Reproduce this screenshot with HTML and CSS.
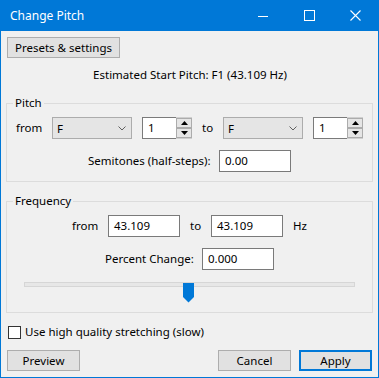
FILE: index.html
```html
<!DOCTYPE html>
<html>
<head>
<meta charset="utf-8">
<link rel="stylesheet" href="styles.css">
</head>
<body>
<div class="window">
  <div class="titlebar">
    <span class="title">Change Pitch</span>
    <div class="caption-btns">
      <span class="cbtn"><svg width="10" height="10" viewBox="0 0 10 10"><path d="M0 5.5H10" stroke="#fff" stroke-width="1"/></svg></span>
      <span class="cbtn"><svg width="11" height="11" viewBox="0 0 11 11"><rect x="0.5" y="0.5" width="10" height="10" fill="none" stroke="#fff" stroke-width="1"/></svg></span>
      <span class="cbtn"><svg width="11" height="11" viewBox="0 0 11 11"><path d="M0.5 0.5L10.5 10.5M10.5 0.5L0.5 10.5" stroke="#fff" stroke-width="1.1"/></svg></span>
    </div>
  </div>
  <div class="content">
    <div class="top-row"><button class="btn presets">Presets &amp; settings</button></div>
    <div class="estimate">Estimated Start Pitch: F1 (43.109 Hz)</div>

    <div class="group pitch">
      <div class="legend">Pitch</div>
      <div class="row r1">
        <span class="lbl l-from">from</span>
        <div class="combo"><span>F</span><svg class="chev" width="8" height="5" viewBox="0 0 8 5"><path d="M0.5 0.5L4 4L7.5 0.5" fill="none" stroke="#606060" stroke-width="1"/></svg></div>
        <div class="spin">
          <div class="spin-text">1</div>
          <div class="spin-btns">
            <div class="sb"><svg width="7" height="4" viewBox="0 0 7 4"><path d="M0 4L3.5 0L7 4Z" fill="#000"/></svg></div>
            <div class="sb"><svg width="7" height="4" viewBox="0 0 7 4"><path d="M0 0L7 0L3.5 4Z" fill="#000"/></svg></div>
          </div>
        </div>
        <span class="lbl l-to">to</span>
        <div class="combo"><span>F</span><svg class="chev" width="8" height="5" viewBox="0 0 8 5"><path d="M0.5 0.5L4 4L7.5 0.5" fill="none" stroke="#606060" stroke-width="1"/></svg></div>
        <div class="spin">
          <div class="spin-text">1</div>
          <div class="spin-btns">
            <div class="sb"><svg width="7" height="4" viewBox="0 0 7 4"><path d="M0 4L3.5 0L7 4Z" fill="#000"/></svg></div>
            <div class="sb"><svg width="7" height="4" viewBox="0 0 7 4"><path d="M0 0L7 0L3.5 4Z" fill="#000"/></svg></div>
          </div>
        </div>
      </div>
      <div class="row r2">
        <span class="lbl l-semi">Semitones (half-steps):</span>
        <div class="tb">0.00</div>
      </div>
    </div>

    <div class="group freq">
      <div class="legend">Frequency</div>
      <div class="row f1">
        <span class="lbl l-ffrom">from</span>
        <div class="tb">43.109</div>
        <span class="lbl l-to">to</span>
        <div class="tb">43.109</div>
        <span class="lbl l-hz">Hz</span>
      </div>
      <div class="row f2">
        <span class="lbl l-pct">Percent Change:</span>
        <div class="tb">0.000</div>
      </div>
      <div class="slider">
        <div class="track"></div>
        <svg class="thumb" width="11" height="20" viewBox="0 0 11 20"><path d="M0 0H11V14L5.5 19.5L0 14Z" fill="#0078d7"/></svg>
      </div>
    </div>

    <label class="check"><span class="box"></span><span>Use high quality stretching (slow)</span></label>

    <div class="buttons">
      <button class="btn">Preview</button>
      <span class="spacer"></span>
      <button class="btn">Cancel</button>
      <button class="btn apply">Apply</button>
    </div>
  </div>
</div>
</body>
</html>
```

FILE: styles.css
```css
* { box-sizing: border-box; }
html, body { margin: 0; padding: 0; }
body {
  width: 379px;
  height: 378px;
  font-family: "Noto Sans", "Open Sans", sans-serif;
  font-size: 11.5px;
  color: #000;
  background: #f0f0f0;
}
.window {
  width: 379px;
  height: 378px;
  border: 1px solid #0078d7;
  border-top: 0;
  background: #f0f0f0;
  display: flex;
  flex-direction: column;
}
.titlebar {
  height: 31px;
  background: #0078d7;
  display: flex;
  align-items: center;
  color: #fff;
  flex: none;
}
.title {
  margin-left: 9px;
  font-size: 12px;
  line-height: 16px;
}
.caption-btns {
  margin-left: auto;
  display: flex;
  height: 31px;
}
.cbtn {
  width: 46px;
  height: 31px;
  display: flex;
  align-items: center;
  justify-content: center;
}
.content {
  padding: 6px 5px 0 6px;
  display: flex;
  flex-direction: column;
}
.btn {
  font: inherit;
  color: #000;
  height: 21px;
  background: #e1e1e1;
  border: 1px solid #adadad;
  padding: 0;
  line-height: 17px;
}
.presets { width: 113px; }
.top-row { display: flex; }
.estimate {
  margin-top: 9px;
  line-height: 16px;
  text-align: center;
  padding-left: 0;
}
.group {
  border: 1px solid #dcdcdc;
  margin-left: -1px;
}
.pitch { margin-top: 20px; padding-bottom: 9px; }
.freq { margin-top: 19px; padding-bottom: 8px; }
.legend {
  margin: -9px 0 0 6px;
  padding: 0 2px;
  line-height: 16px;
  background: #f0f0f0;
  width: fit-content;
}
.row {
  display: flex;
  align-items: center;
  height: 22px;
}
.r1 { margin-top: 6px; padding-left: 9px; }
.r2 { margin-top: 11px; padding-left: 81px; }
.f1 { margin-top: 6px; padding-left: 65px; }
.f2 { margin-top: 11px; padding-left: 98px; }
.lbl { line-height: 16px; white-space: nowrap; }
.l-from { width: 36px; }
.l-to { width: 21px; margin-left: 10px; }
.l-semi { width: 131px; }
.l-ffrom { width: 36px; }
.l-hz { margin-left: 10px; }
.l-pct { width: 97px; }
.combo {
  width: 80px;
  height: 22px;
  background: #e5e5e5;
  border: 1px solid #acacac;
  display: flex;
  align-items: center;
  padding-left: 4px;
  padding-right: 5px;
}
.combo .chev { margin-left: auto; }
.spin {
  display: flex;
  margin-left: 10px;
  height: 22px;
}
.spin-text {
  width: 34px;
  height: 22px;
  background: #fff;
  border: 1px solid #7a7a7a;
  border-right: 0;
  padding-left: 5px;
  line-height: 20px;
}
.spin-btns {
  width: 16px;
  height: 22px;
  background: #fff;
  border: 1px solid #cfcfcf;
  border-left: 0;
  display: flex;
  flex-direction: column;
  padding: 0 0 0 0;
}
.sb {
  height: 11px;
  width: 16px;
  background: #e5e5e5;
  border: 1px solid #acacac;
  display: flex;
  align-items: center;
  justify-content: center;
}
.tb {
  width: 72px;
  height: 22px;
  background: #fff;
  border: 1px solid #7a7a7a;
  padding-left: 5px;
  line-height: 20px;
}
.f1 .tb + .l-to { margin-left: 10px; }
.slider {
  position: relative;
  margin: 12px 0 0 17px;
  width: 331px;
  height: 22px;
}
.track {
  margin-top: 9px;
  height: 5px;
  background: #e7e7e7;
  border: 1px solid #d6d6d6;
}
.thumb {
  position: absolute;
  left: 159px;
  top: 1px;
}
.check {
  margin-top: 11px;
  display: flex;
  align-items: flex-start;
  height: 16px;
  line-height: 16px;
}
.box {
  width: 13px;
  height: 13px;
  margin-top: 2px;
  background: #fff;
  border: 1px solid #333;
  margin-right: 4px;
  margin-left: 1px;
}
.buttons {
  margin-top: 10px;
  display: flex;
  margin-right: 1px;
}
.buttons .btn { width: 73px; }
.spacer { flex: 1; }
.apply {
  margin-left: 8px;
  border: 2px solid #0078d7;
}
```
